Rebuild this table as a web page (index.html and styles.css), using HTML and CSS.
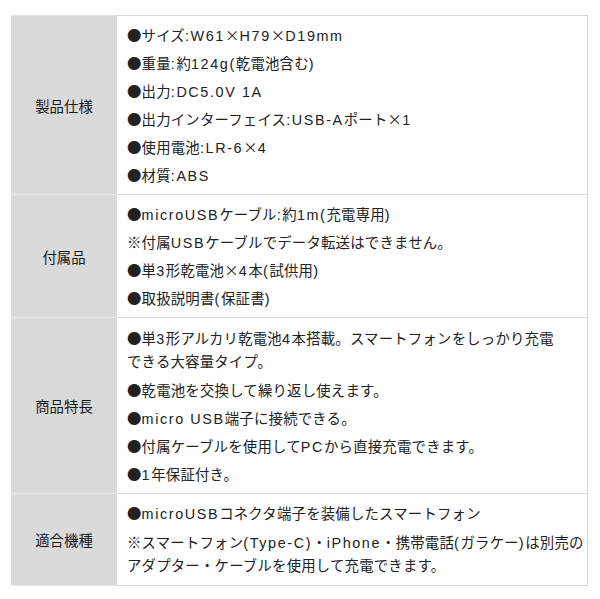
FILE: index.html
```html
<!DOCTYPE html>
<html lang="ja">
<head>
<meta charset="utf-8">
<link rel="stylesheet" href="styles.css">
</head>
<body>
<table class="spec">
  <colgroup>
    <col class="col-head">
    <col>
  </colgroup>
  <tr>
    <th>製品仕様</th>
    <td>
      <p>●サイズ<span class="en">:W61</span>×<span class="en">H79</span>×<span class="en">D19mm</span></p>
      <p>●重量<span class="en">:</span>約<span class="en">124g(</span>乾電池含む<span class="en">)</span></p>
      <p>●出力<span class="en">:DC5.0V 1A</span></p>
      <p>●出力インターフェイス<span class="en">:USB-A</span>ポート×<span class="en">1</span></p>
      <p>●使用電池<span class="en">:LR-6</span>×<span class="en">4</span></p>
      <p>●材質<span class="en">:ABS</span></p>
    </td>
  </tr>
  <tr>
    <th>付属品</th>
    <td>
      <p>●<span class="en">microUSB</span>ケーブル<span class="en">:</span>約<span class="en">1m(</span>充電専用<span class="en">)</span></p>
      <p>※付属<span class="en">USB</span>ケーブルでデータ転送はできません。</p>
      <p>●単<span class="en">3</span>形乾電池×<span class="en">4</span>本<span class="en">(</span>試供用<span class="en">)</span></p>
      <p>●取扱説明書<span class="en">(</span>保証書<span class="en">)</span></p>
    </td>
  </tr>
  <tr>
    <th>商品特長</th>
    <td>
      <p class="multi">●単<span class="en">3</span>形アルカリ乾電池<span class="en">4</span>本搭載。スマートフォンをしっかり充電<br>できる大容量タイプ。</p>
      <p>●乾電池を交換して繰り返し使えます。</p>
      <p>●<span class="en">micro USB</span>端子に接続できる。</p>
      <p>●付属ケーブルを使用して<span class="en">PC</span>から直接充電できます。</p>
      <p>●<span class="en">1</span>年保証付き。</p>
    </td>
  </tr>
  <tr>
    <th>適合機種</th>
    <td>
      <p>●<span class="en">microUSB</span>コネクタ端子を装備したスマートフォン</p>
      <p class="multi">※スマートフォン<span class="en">(Type-C)</span>・<span class="en">iPhone</span>・携帯電話<span class="en">(</span>ガラケー<span class="en">)</span>は別売の<br>アダプター・ケーブルを使用して充電できます。</p>
    </td>
  </tr>
</table>
</body>
</html>
```

FILE: styles.css
```css
html, body {
  margin: 0;
  padding: 0;
  background: #fff;
}
body {
  padding: 15px 12px 0 11px;
  font-family: "Noto Sans CJK JP", "Noto Sans", sans-serif;
  font-size: 14.4px;
  color: #222;
}
.spec {
  width: 577px;
  table-layout: fixed;
  border-collapse: collapse;
  border-spacing: 0;
}
.spec .col-head {
  width: 106px;
}
.spec th {
  background: #dadada;
  font-weight: normal;
  text-align: center;
  vertical-align: middle;
  padding: 0;
  color: #1a1a1a;
  border-top: 1px solid #e6e6e6;
  border-bottom: 1px solid #e6e6e6;
}
.spec td {
  padding: 8px 6px 9px 10px;
  border-top: 1px solid #d6d6d6;
  border-bottom: 1px solid #d6d6d6;
  border-right: 1px solid #d6d6d6;
  vertical-align: top;
}
.spec p {
  margin: 0 0 7px;
  line-height: 21px;
  letter-spacing: 0.2px;
  white-space: nowrap;
}
.spec p.multi {
  line-height: 23px;
}
.spec p:last-child {
  margin-bottom: 0;
}
.en {
  font-family: "Liberation Sans", Arial, sans-serif;
  letter-spacing: 1.6px;
  line-height: 1;
}
```
